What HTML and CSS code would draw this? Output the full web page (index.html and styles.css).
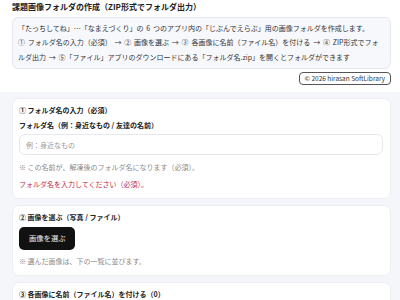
FILE: index.html
```html
<!DOCTYPE html>
<html lang="ja">
<head>
<meta charset="utf-8">
<title>課題画像フォルダの作成</title>
<link rel="stylesheet" href="styles.css">
</head>
<body>
<header class="head">
  <h1 class="title">課題画像フォルダの作成（ZIP形式でフォルダ出力）</h1>
  <div class="intro">
    <p>「たっちしてね」…「なまえづくり」の 6 つのアプリ内の「じぶんでえらぶ」用の画像フォルダを作成します。<br>① フォルダ名の入力（必須） → ② 画像を選ぶ → ③ 各画像に名前（ファイル名）を付ける → ④ ZIP形式でフォルダ出力 → ⑤「ファイル」アプリのダウンロードにある「フォルダ名.zip」を開くとフォルダができます</p>
  </div>
  <div class="credit-row"><span class="credit">© 2026 hirasan SoftLibrary</span></div>
</header>
<main class="main">
  <section class="card">
    <h2 class="card-title">① フォルダ名の入力（必須）</h2>
    <label class="label" for="folder">フォルダ名（例：身近なもの / 友達の名前）</label>
    <input class="input" id="folder" type="text" placeholder="例：身近なもの">
    <p class="note">※ この名前が、解凍後のフォルダ名になります（必須）。</p>
    <p class="error">フォルダ名を入力してください（必須）。</p>
  </section>
  <section class="card">
    <h2 class="card-title">② 画像を選ぶ（写真 / ファイル）</h2>
    <button class="btn" type="button">画像を選ぶ</button>
    <p class="note">※ 選んだ画像は、下の一覧に並びます。</p>
  </section>
  <section class="card">
    <h2 class="card-title">③ 各画像に名前（ファイル名）を付ける（0）</h2>
  </section>
</main>
</body>
</html>
```
FILE: styles.css
```css
* { box-sizing: border-box; }
html, body { margin: 0; padding: 0; }
body {
  font-family: "Noto Sans CJK JP", "Noto Sans", sans-serif;
  color: #1f2126;
  background: #f5f6f9;
  height: 300px;
  overflow: hidden;
}
.head {
  background: #ffffff;
  padding: 1px 9px 7px 12px;
}
.title {
  margin: 0;
  font-size: 8px;
  line-height: 11px;
  font-weight: 700;
  color: #222;
}
.intro {
  margin-top: 5px;
  background: #f7f8fc;
  border: 1px solid #e6e8f0;
  border-radius: 6px;
  padding: 3px 5px 4px;
}
.intro p {
  margin: 0;
  font-size: 7px;
  line-height: 14.4px;
  word-spacing: 1.2px;
  color: #333;
}
.credit-row {
  display: flex;
  justify-content: flex-end;
  margin-top: 3px;
}
.credit {
  display: block;
  border: 1px solid #555;
  border-radius: 4px;
  font-size: 6.5px;
  line-height: 11px;
  padding: 0 5px;
  color: #333;
}
.main {
  padding: 6px 9px 6px 12px;
  display: flex;
  flex-direction: column;
  gap: 6px;
}
.card {
  background: #fff;
  border: 1px solid #eceef2;
  border-radius: 7px;
  padding: 6px 7px 8px 6px;
  display: flex;
  flex-direction: column;
  align-items: flex-start;
}
.card-title {
  margin: 0;
  font-size: 7px;
  line-height: 11px;
  font-weight: 700;
  color: #222;
}
.label {
  margin-top: 4px;
  font-size: 7px;
  line-height: 11px;
  font-weight: 700;
  color: #222;
}
.input {
  margin-top: 3px;
  width: 100%;
  height: 21px;
  border: 1px solid #e6e8ee;
  border-radius: 6px;
  padding: 0 6px;
  font-family: inherit;
  font-size: 7px;
  background: #fff;
  outline: none;
}
.input::placeholder { color: #9a9a9a; }
.note {
  margin: 6.5px 0 0;
  font-size: 7px;
  line-height: 11px;
  color: #8a8a8a;
}
.error {
  margin: 6px 0 0;
  font-size: 7px;
  line-height: 11px;
  color: #c0294c;
}
.btn {
  margin-top: 4px;
  height: 23px;
  padding: 0 10px;
  border: none;
  border-radius: 5px;
  background: #111;
  color: #f2f2f2;
  font-family: inherit;
  font-size: 7.3px;
}
```
